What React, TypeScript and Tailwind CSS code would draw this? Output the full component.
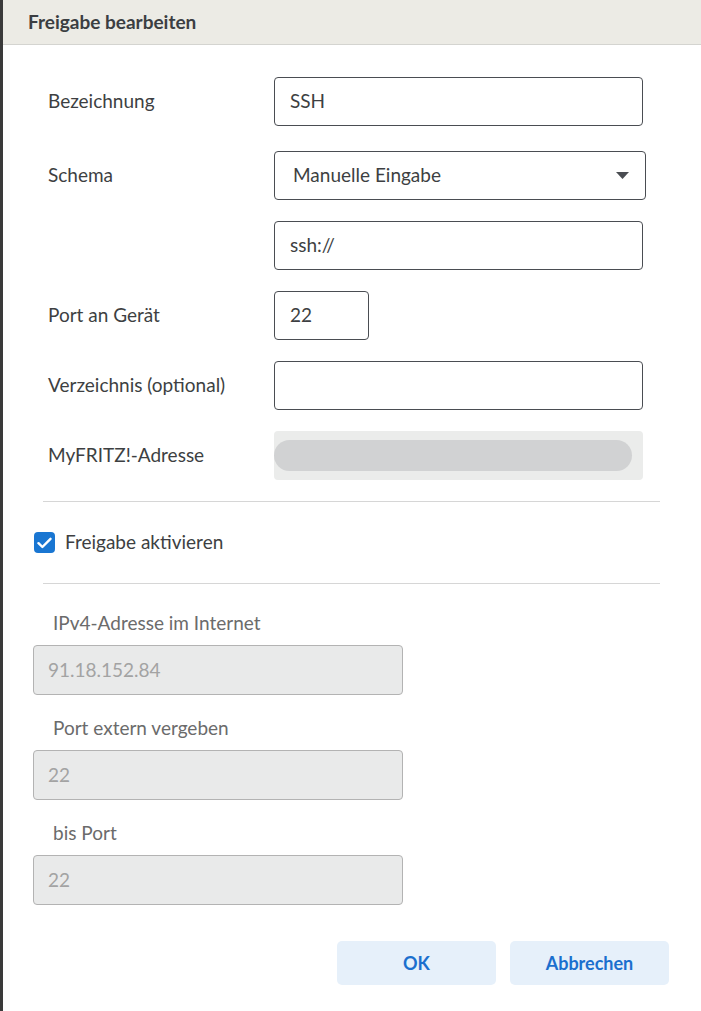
import React from "react";

const font = { fontFamily: "Lato, 'Open Sans', sans-serif" };

function Row({ label, children, className = "" }: { label?: string; children: React.ReactNode; className?: string }) {
  return (
    <div className={`flex items-center h-[49px] ${className}`}>
      <div className="w-[226px] shrink-0 text-[19px] text-[#3d3f42]">{label}</div>
      {children}
    </div>
  );
}

function TextBox({ value, w = "w-[369px]" }: { value: string; w?: string }) {
  return (
    <div className={`${w} h-[49px] border border-[#4a4d52] rounded-[4px] flex items-center pl-[15px] text-[19px] text-[#3d3f42]`}>
      {value}
    </div>
  );
}

function Disabled({ label, value }: { label: string; value: string }) {
  return (
    <div className="flex flex-col">
      <div className="pl-[50px] text-[19px] text-[#6b6b6b] h-[26px] flex items-center">{label}</div>
      <div className="ml-[30px] mt-[9px] w-[370px] h-[50px] bg-[#e9eaea] border border-[#b3b3b3] rounded-[4px] flex items-center pl-[14px] text-[19px] text-[#a3a3a3]">
        {value}
      </div>
    </div>
  );
}

export default function App() {
  return (
    <div className="w-[701px] min-h-[1011px] bg-white border-l-[3px] border-[#3a3a3a]" style={font}>
      <div className="h-[45px] bg-[#ecebe5] border-b border-[#d4d4d0] flex items-center pl-[25px]">
        <span className="text-[19px] font-bold text-[#3b3e42]">Freigabe bearbeiten</span>
      </div>

      <div className="pl-[45px] pt-[32px]">
        <Row label="Bezeichnung">
          <TextBox value="SSH" />
        </Row>
        <Row label="Schema" className="mt-[25px]">
          <div className="w-[372px] h-[49px] border border-[#4a4d52] rounded-[4px] flex items-center justify-between pl-[18px] pr-[16px] text-[19px] text-[#3d3f42]">
            <span>Manuelle Eingabe</span>
            <svg width="13" height="7" viewBox="0 0 13 7">
              <polygon points="0,0 13,0 6.5,7" fill="#4a4d52" />
            </svg>
          </div>
        </Row>
        <Row className="mt-[21px]">
          <TextBox value="ssh://" />
        </Row>
        <Row label="Port an Gerät" className="mt-[21px]">
          <TextBox value="22" w="w-[95px]" />
        </Row>
        <Row label="Verzeichnis (optional)" className="mt-[21px]">
          <TextBox value="" />
        </Row>
        <Row label="MyFRITZ!-Adresse" className="mt-[21px]">
          <div className="w-[369px] h-[49px] bg-[#ebeceb] rounded-[4px] flex items-center">
            <div className="w-[358px] h-[31px] bg-[#d1d2d3] rounded-full" />
          </div>
        </Row>
      </div>

      <div className="ml-[40px] mr-[41px] mt-[21px] h-px bg-[#d6d6d6]" />

      <div className="flex items-center h-[81px] pl-[31px]">
        <div className="w-[21px] h-[21px] rounded-[4px] bg-[#1976d2] flex items-center justify-center">
          <svg width="15" height="12" viewBox="0 0 15 12">
            <path d="M1.5 6.2 L5.4 10 L13.5 1.8" stroke="white" strokeWidth="2.4" fill="none" strokeLinecap="round" strokeLinejoin="round" />
          </svg>
        </div>
        <span className="ml-[10px] text-[19px] text-[#3d3f42]">Freigabe aktivieren</span>
      </div>

      <div className="ml-[40px] mr-[41px] h-px bg-[#d6d6d6]" />

      <div className="flex flex-col gap-[20px] pt-[26px]">
        <Disabled label="IPv4-Adresse im Internet" value="91.18.152.84" />
        <Disabled label="Port extern vergeben" value="22" />
        <Disabled label="bis Port" value="22" />
      </div>

      <div className="flex justify-end gap-[14px] pr-[32px] mt-[36px]">
        <button className="w-[159px] h-[44px] rounded-[5px] bg-[#e6f0fa] text-[#1b6fce] font-bold text-[18px]">OK</button>
        <button className="w-[159px] h-[44px] rounded-[5px] bg-[#e6f0fa] text-[#1b6fce] font-bold text-[18px]">Abbrechen</button>
      </div>
    </div>
  );
}
